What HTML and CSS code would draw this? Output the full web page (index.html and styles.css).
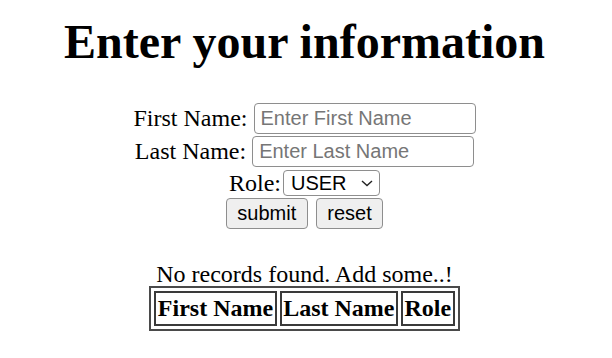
FILE: index.html
```html
<!DOCTYPE html>
<html>
<head>
<meta charset="utf-8">
<link rel="stylesheet" href="styles.css">
</head>
<body>
<div class="page">
  <h1 class="title">Enter your information</h1>
  <form class="form">
    <div class="row row-first">
      <label class="label">First Name:</label>
      <input class="text-input" type="text" placeholder="Enter First Name">
    </div>
    <div class="row row-last">
      <label class="label">Last Name:</label>
      <input class="text-input" type="text" placeholder="Enter Last Name">
    </div>
    <div class="row row-role">
      <label class="label label-tight">Role:</label>
      <span class="select-wrap">
        <select class="select"><option>USER</option><option>ADMIN</option></select>
        <svg class="chevron" width="12" height="7" viewBox="0 0 12 7"><path d="M1 1 L6 5.5 L11 1" fill="none" stroke="#222" stroke-width="1.4"/></svg>
      </span>
    </div>
    <div class="row row-buttons">
      <button class="btn" type="button">submit</button>
      <button class="btn" type="reset">reset</button>
    </div>
  </form>
  <p class="empty">No records found. Add some..!</p>
  <table class="records">
    <thead>
      <tr><th class="cell">First Name</th><th class="cell">Last Name</th><th class="cell">Role</th></tr>
    </thead>
  </table>
</div>
</body>
</html>
```

FILE: styles.css
```css
html, body {
  margin: 0;
  padding: 0;
  background: #ffffff;
}
body {
  padding-right: 3px;
  font-family: "Liberation Serif", "Times New Roman", serif;
  font-size: 24px;
  color: #000;
}
.page {
  display: flex;
  flex-direction: column;
  align-items: center;
}
.title {
  margin: 14px 0 0;
  font-size: 48px;
  line-height: 55px;
  font-weight: bold;
}
.form {
  margin-top: 34px;
  display: flex;
  flex-direction: column;
  align-items: center;
}
.row {
  display: flex;
  align-items: center;
  gap: 6px;
  height: 31px;
}
.row-last { margin-top: 2px; }
.row-role { margin-top: 2px; height: 28px; gap: 2px; }
.row-buttons { margin-top: 1px; gap: 8px; }
.label {
  line-height: 27px;
  white-space: nowrap;
}
.text-input {
  box-sizing: border-box;
  width: 222px;
  height: 31px;
  margin: 0;
  padding: 0 6px;
  border: 1.5px solid #8e8e8e;
  border-radius: 4px;
  font-family: "Liberation Sans", Arial, sans-serif;
  font-size: 20px;
  color: #000;
  background: #fff;
  outline: none;
}
.text-input::placeholder {
  color: #767676;
}
.select-wrap {
  position: relative;
  display: inline-flex;
}
.select {
  appearance: none;
  -webkit-appearance: none;
  box-sizing: border-box;
  width: 97px;
  height: 26px;
  margin: 0;
  padding: 0 0 0 7px;
  border: 1.5px solid #8e8e8e;
  border-radius: 4px;
  background: #fff;
  font-family: "Liberation Sans", Arial, sans-serif;
  font-size: 20px;
  line-height: 23px;
  color: #000;
}
.chevron {
  position: absolute;
  right: 7px;
  top: 10px;
  pointer-events: none;
}
.btn {
  box-sizing: border-box;
  height: 31px;
  margin: 0;
  padding: 0 10.5px;
  border: 1.5px solid #8e8e8e;
  border-radius: 4px;
  background: #efefef;
  font-family: "Liberation Sans", Arial, sans-serif;
  font-size: 20px;
  color: #000;
}
.empty {
  margin: 33px 0 0;
  line-height: 24px;
}
.records {
  border: 2px solid #4a4a4a;
  border-spacing: 3px;
  border-collapse: separate;
}
.cell {
  border: 2px solid #3a3a3a;
  padding: 2px 1.5px;
  font-weight: bold;
  font-size: 24px;
  line-height: 27px;
}
```
